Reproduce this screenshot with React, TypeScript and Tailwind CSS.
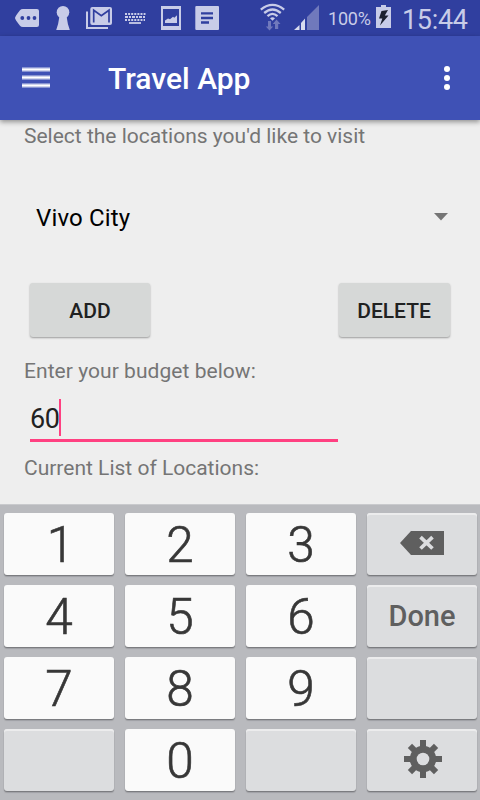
import React from "react";

type KeySpec = { id: string; label?: string; icon?: React.ReactNode; light?: boolean };

const BackspaceIcon = () => (
  <svg width="44" height="24" viewBox="0 0 44 24" className="block">
    <path d="M0 12 11 0h33v24H11Z" fill="#5f5f5f" />
    <path d="m20.500 6.200 12 11.300M32.500 6.200l-12 11.300" stroke="#dcdddf" strokeWidth="3.700" />
  </svg>
);

const GearIcon = () => (
  <svg width="38" height="38" viewBox="-19 -19 38 38" className="ml-[2px] block">
    <g fill="#5f5f5f">
      <path d="M-3-19H3V19H-3Z" />
      <path d="M-3-19H3V19H-3Z" transform="rotate(90)" />
      <path d="M-3-18.500H3V18.500H-3Z" transform="rotate(45)" />
      <path d="M-3-18.500H3V18.500H-3Z" transform="rotate(-45)" />
      <circle r="13.200" />
    </g>
    <circle r="6.300" fill="#dcdddf" />
  </svg>
);

const keys: KeySpec[] = [
  { id: "1", label: "1", light: true },
  { id: "2", label: "2", light: true },
  { id: "3", label: "3", light: true },
  { id: "backspace", icon: <BackspaceIcon /> },
  { id: "4", label: "4", light: true },
  { id: "5", label: "5", light: true },
  { id: "6", label: "6", light: true },
  { id: "done", label: "Done" },
  { id: "7", label: "7", light: true },
  { id: "8", label: "8", light: true },
  { id: "9", label: "9", light: true },
  { id: "blank-right" },
  { id: "blank-left" },
  { id: "0", label: "0", light: true },
  { id: "blank-middle" },
  { id: "settings", icon: <GearIcon /> },
];

const Key = ({ item }: { item: KeySpec }) =>
  item.light ? (
    <button className="flex h-[62px] items-center justify-center rounded-[3px] bg-[#fafafa] text-[49.500px] leading-none font-light text-[#373737] shadow-[0_1px_1px_#77787c,0_2px_1px_#a5a6aa] [-webkit-text-stroke:0.6px_#373737]">
      <span className={item.label === "1" ? "pt-[4px] pl-[3px]" : "pt-[4px]"}>{item.label}</span>
    </button>
  ) : (
    <button className="flex h-[62px] items-center justify-center rounded-[3px] bg-[#dcdddf] text-[29px] leading-none font-medium text-[#5f5f5f] shadow-[inset_0_2px_0_#ececed,0_1px_1px_#77787c,0_2px_1px_#a5a6aa]">
      {item.icon ? <span className="pb-[2px]">{item.icon}</span> : item.label}
    </button>
  );

const StatusBar = () => (
  <div className="flex h-9 items-start bg-[#303f9f] text-[#c8cce8]">
    {/* message tag */}
    <svg className="ml-[14px] shrink-0" width="26" height="36" viewBox="14 0 26 36">
      <path d="M15 18Q15 16.500 20 10.300 21 9 23 9H37Q39 9 39 11V25Q39 27 37 27H23Q21 27 20 25.700 15 19.500 15 18Z" fill="#c8cce8" />
      <g fill="#303f9f"><circle cx="22.300" cy="18" r="1.900" /><circle cx="28.500" cy="18" r="1.900" /><circle cx="34.500" cy="18" r="1.900" /></g>
    </svg>
    {/* keyhole */}
    <svg className="ml-[15px] shrink-0" width="16" height="36" viewBox="55 0 16 36">
      <circle cx="63" cy="12.300" r="6.300" fill="#c8cce8" />
      <path d="M59.500 16h7q1 8 3.300 14H56.200Q58.500 24 59.500 16Z" fill="#c8cce8" />
    </svg>
    {/* mail stack */}
    <svg className="ml-[14px] shrink-0" width="28" height="36" viewBox="85 0 28 36" fill="none">
      <path d="M87 11.500V28H108" stroke="#c8cce8" strokeWidth="2" />
      <rect x="90.300" y="7" width="21.700" height="18" rx="2" fill="#c8cce8" />
      <path d="M93.700 22.500V10.200L101.300 15.800 109 10.200V22.500" stroke="#303f9f" strokeWidth="1.700" />
    </svg>
    {/* keyboard */}
    <svg className="ml-[11px] shrink-0" width="22" height="36" viewBox="124 0 22 36" fill="none" stroke="#c8cce8">
      <path d="M125 14H145.500" strokeWidth="2" strokeDasharray="2 1.100" />
      <path d="M125 17H145" strokeWidth="1.800" strokeDasharray="3 1 2 1" />
      <path d="M125 20H145" strokeWidth="1.800" strokeDasharray="2 1.100" />
      <path d="M129 23H141" strokeWidth="1.800" />
    </svg>
    {/* picture */}
    <svg className="ml-[15px] shrink-0" width="20" height="36" viewBox="161 0 20 36">
      <path d="M161 6h20v24h-20Z" fill="#c8cce8" />
      <path d="M163 9h16v17h-16Z" fill="#303f9f" />
      <path d="M165 23v-2.500l3-2 2 .7 3-2.500 1.300 1 2.700-2.500V23Z" fill="#c8cce8" />
    </svg>
    {/* note */}
    <svg className="ml-[14px] shrink-0" width="24" height="36" viewBox="195 0 24 36">
      <rect x="195.300" y="6" width="23.700" height="24" rx="1" fill="#c8cce8" />
      <path d="M201 13.300h12M201 18h12M201 22.500h8" stroke="#303f9f" strokeWidth="2.300" />
    </svg>
    {/* wifi with traffic arrows */}
    <svg className="ml-[41px] shrink-0" width="26" height="36" viewBox="260 0 26 36" fill="none">
      <g stroke="#c8cce8" strokeWidth="2.300">
        <path d="M260.800 9.600Q272.500.200 284.200 9.600" />
        <path d="M264.200 13Q272.500 6 280.800 13" />
        <path d="M267.500 16.200Q272.500 11.600 277.500 16.200" />
      </g>
      <path d="M270 18.300Q272.500 16.200 275 18.300L272.500 20.800Z" fill="#c8cce8" />
      <path d="M268 21h3v5.500h2.200L269.500 30.500 265.800 26.500H268ZM275 29h3.200v-5H280.500L276.500 19.500 272.800 24H275Z" fill="#7079bc" />
    </svg>
    {/* signal strength */}
    <svg className="ml-[8px] shrink-0" width="25" height="36" viewBox="294 0 25 36">
      <path d="M294 30 299.500 25V30ZM301 30V23L305 18.500V30Z" fill="#d8dbee" />
      <path d="M307 30V17L319 5V30Z" fill="#7079bc" />
    </svg>
    <span className="ml-[9px] w-[48px] pt-[7px] text-[18px] leading-6 tracking-[-0.2px] whitespace-nowrap">100%</span>
    {/* charging battery */}
    <svg className="shrink-0" width="15" height="36" viewBox="376 0 15 36">
      <path d="M376 7h5V5h5v2h5v21h-15Z" fill="#c8cce8" />
      <path d="M381.500 11 388 10 384.800 15.500H388.500L380 25.500 382.300 18.500H379Z" fill="#1b2030" />
    </svg>
    <span className="ml-[11px] pt-1 text-[27px] leading-8 tracking-[-0.3px] whitespace-nowrap">15:44</span>
  </div>
);

export default function App() {
  return (
    <div className="flex h-[800px] w-[480px] flex-col overflow-hidden bg-[#eeeeee] font-[Roboto,sans-serif]">
      <StatusBar />
      <header className="z-10 flex h-[84px] shrink-0 items-center bg-[#3f51b5] px-[22px] text-white shadow-[0_2px_5px_rgba(0,0,0,0.4)]">
        <svg width="28" height="22" viewBox="0 0 28 22" className="shrink-0" stroke="white">
          <path d="M0 2.500H28M0 10.500H28M0 18.500H28" strokeWidth="4.400" opacity=".5" />
          <path d="M0 2.500H28M0 10.500H28M0 18.500H28" strokeWidth="2" />
        </svg>
        <h1 className="ml-[58px] flex-1 pt-[2px] text-[30px] leading-9 font-medium">Travel App</h1>
        <svg width="6" height="24" viewBox="0 0 6 24" fill="white" className="mr-[8px] shrink-0">
          <circle cx="3" cy="3" r="3" /><circle cx="3" cy="12" r="3" /><circle cx="3" cy="21" r="3" />
        </svg>
      </header>
      <main className="flex h-[384px] shrink-0 flex-col">
        <p className="ml-6 mt-[2px] text-[21px] leading-7 text-[#757575]">Select the locations you'd like to visit</p>
        <div className="mt-[50px] flex h-9 items-center justify-between pr-[32px] pl-9">
          <span className="text-[24px] leading-8 tracking-[0.15px] text-black">Vivo City</span>
          <svg width="14" height="8" viewBox="0 0 14 8" className="mb-[2px]"><path d="M0 0H14L7 7.500Z" fill="#757575" /></svg>
        </div>
        <div className="mt-[47px] flex justify-between pr-[30px] pl-[30px] text-[21px] leading-none font-medium text-[#202121]">
          <button className="h-[54px] w-[120px] rounded-[3px] bg-[#d6d8d7] pt-[2px] shadow-[0_1px_2px_rgba(0,0,0,0.35)]">ADD</button>
          <button className="h-[54px] w-[111px] rounded-[3px] bg-[#d6d8d7] pt-[2px] pr-[1px] shadow-[0_1px_2px_rgba(0,0,0,0.35)]">DELETE</button>
        </div>
        <p className="ml-6 mt-5 text-[21px] leading-7 tracking-[0.05px] text-[#757575]">Enter your budget below:</p>
        <div className="mt-[14px] ml-[30px] flex h-[43px] w-[308px] items-start border-b-[3px] border-[#ff4081]">
          <span className="w-[29px] pt-[4px] text-[27px] leading-8 tracking-[-0.3px] whitespace-nowrap text-[#212121]">60</span>
          <span className="h-[37px] w-[2px] bg-[#ff4081]" />
        </div>
        <p className="ml-6 mt-[12px] text-[21px] leading-7 text-[#757575]">Current List of Locations:</p>
      </main>
      <section className="grid h-[296px] shrink-0 grid-cols-4 content-start gap-x-[11px] gap-y-[10px] border-t border-[#c9cacd] bg-[#b9babe] pt-[8px] pr-[3px] pl-1">
        {keys.map((k) => <Key key={k.id} item={k} />)}
      </section>
    </div>
  );
}
